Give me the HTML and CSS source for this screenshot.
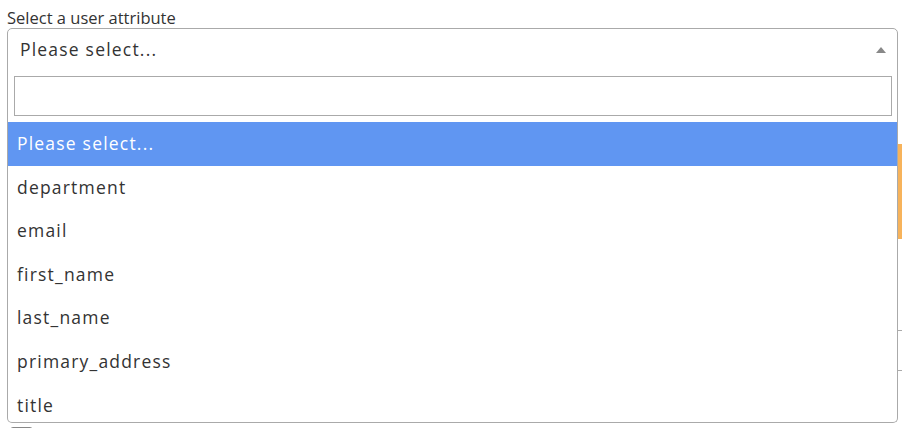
FILE: index.html
```html
<!DOCTYPE html>
<html lang="en">
<head>
  <meta charset="UTF-8">
  <meta name="viewport" content="width=device-width, initial-scale=1.0">
  <title>User Attribute</title>
  <link rel="stylesheet" href="styles.css">
</head>
<body>
  <div class="page">
    <div class="form-group">
      <label for="attr">Select a user attribute</label>
      <div class="select open">
        <div class="selection" id="attr">
          <span class="selection-text">Please select...</span>
          <span class="arrow"></span>
        </div>

        <div class="dropdown">
          <div class="search">
            <input type="text" aria-label="Search">
          </div>
          <ul class="options">
            <li class="highlighted">Please select...</li>
            <li>department</li>
            <li>email</li>
            <li>first_name</li>
            <li>last_name</li>
            <li>primary_address</li>
            <li>title</li>
          </ul>
        </div>
      </div>
    </div>

    <!-- rest of the form, hidden under the open dropdown -->
    <div class="behind">
      <div class="row">
        <div class="spacer"></div>
        <button class="btn-add" type="button" aria-label="Add"></button>
      </div>
      <div class="row">
        <div class="spacer"></div>
        <input class="value-input" type="text" aria-label="Value">
      </div>
      <div class="check-row">
        <span class="check"></span>
      </div>
    </div>
  </div>
</body>
</html>
```

FILE: styles.css
```css
html, body {
  margin: 0;
  height: 100%;
}

body {
  font-family: 'Open Sans', 'DejaVu Sans', sans-serif;
  color: #333;
  background-color: white;
}

.page {
  height: 428px;
  padding: 8px 0 0 7px;
  box-sizing: border-box;
  overflow: hidden;
}

label {
  display: block;
  font-size: 16.5px;
  line-height: 20px;
  color: #333;
}

.select {
  position: relative;
  width: 891px;
}

.selection {
  display: flex;
  align-items: center;
  justify-content: space-between;
  height: 42px;
  padding: 0 11px 0 12px;
  border: 1px solid #aaa;
  border-radius: 5px 5px 0 0;
  box-sizing: border-box;
  font-size: 17.5px;
  letter-spacing: 1.2px;
}

.arrow {
  width: 0;
  height: 0;
  border-left: 5.5px solid transparent;
  border-right: 5.5px solid transparent;
  border-bottom: 6px solid #888;
  margin-top: 2px;
}

.dropdown {
  position: absolute;
  top: 41px;
  left: 0;
  right: 0;
  z-index: 10;
  background-color: white;
  border: 1px solid #aaa;
  border-top: none;
  border-radius: 0 0 5px 5px;
  overflow: hidden;
}

.search {
  padding: 7px 5px 6px 6px;
}

.search input {
  display: block;
  width: 100%;
  height: 40px;
  border: 1px solid #aaa;
  box-sizing: border-box;
  font-size: 16px;
  outline: none;
}

.options {
  list-style: none;
  margin: 0;
  padding: 0;
  max-height: 300px;
  overflow: hidden;
}

.options li {
  height: 43.6px;
  line-height: 43.6px;
  padding: 0 9px;
  font-size: 17.5px;
  letter-spacing: 1.2px;
  color: #333;
}

.options li.highlighted {
  background-color: #6096f2;
  color: white;
}

.behind {
  display: flex;
  flex-direction: column;
}

.row {
  display: flex;
}

.spacer {
  flex: 1;
}

.btn-add {
  width: 60px;
  height: 95px;
  margin: 74px -40px 0 0;
  padding: 0;
  background-color: #f7b35b;
  border: none;
  border-radius: 3px;
}

.value-input {
  width: 60px;
  height: 41px;
  margin: 91px -40px 0 0;
  border: 1px solid #aaa;
  box-sizing: border-box;
}

.check-row {
  margin-top: 56px;
  padding-left: 3px;
}

.check {
  display: block;
  width: 23px;
  height: 23px;
  border: 1px solid #888;
  border-radius: 3px;
  box-sizing: border-box;
}
```
